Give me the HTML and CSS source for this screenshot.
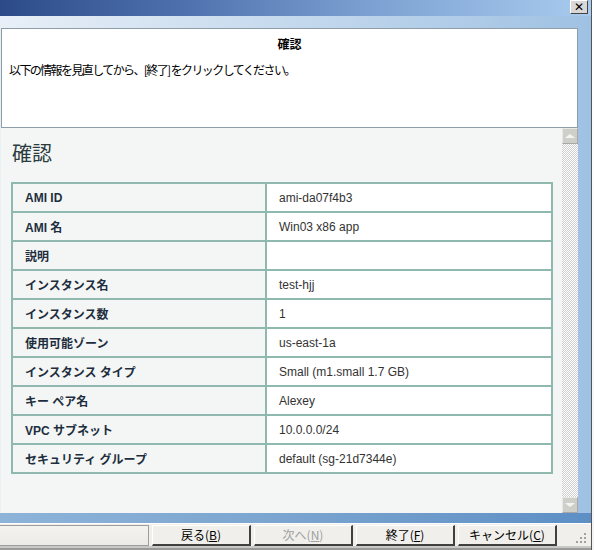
FILE: index.html
```html
<!DOCTYPE html>
<html lang="ja">
<head>
<meta charset="utf-8">
<link rel="stylesheet" href="styles.css">
</head>
<body>
<div class="screen">
  <div class="window">
    <div class="titlebar">
      <div class="close">✕</div>
    </div>
    <div class="frame">
      <div class="header">
        <div class="header-title">確認</div>
        <div class="header-text">以下の情報を見直してから、[終了] をクリックしてください。</div>
      </div>
      <div class="content">
        <div class="scroll-area">
          <h1 class="heading">確認</h1>
          <table class="info">
            <tr><th>AMI ID</th><td>ami-da07f4b3</td></tr>
            <tr><th>AMI 名</th><td>Win03 x86 app</td></tr>
            <tr><th>説明</th><td></td></tr>
            <tr><th>インスタンス名</th><td>test-hjj</td></tr>
            <tr><th>インスタンス数</th><td>1</td></tr>
            <tr><th>使用可能ゾーン</th><td>us-east-1a</td></tr>
            <tr><th>インスタンス タイプ</th><td>Small (m1.small 1.7 GB)</td></tr>
            <tr><th>キー ペア名</th><td>Alexey</td></tr>
            <tr><th>VPC サブネット</th><td>10.0.0.0/24</td></tr>
            <tr><th>セキュリティ グループ</th><td>default (sg-21d7344e)</td></tr>
          </table>
        </div>
        <div class="scrollbar">
          <div class="sb-btn up"><span class="tri-up"></span></div>
          <div class="sb-track"></div>
          <div class="sb-btn down"><span class="tri-down"></span></div>
        </div>
      </div>
      <div class="blue-strip"></div>
    </div>
    <div class="buttonbar">
      <div class="field"></div>
      <div class="btn">戻る(<u>B</u>)</div>
      <div class="btn disabled">次へ(<u>N</u>)</div>
      <div class="btn">終了(<u>F</u>)</div>
      <div class="btn">キャンセル(<u>C</u>)</div>
      <div class="grip">
        <svg width="12" height="12" viewBox="0 0 12 12">
          <rect x="9" y="1" width="2" height="2" fill="#a0a0a0"/>
          <rect x="5" y="5" width="2" height="2" fill="#a0a0a0"/>
          <rect x="9" y="5" width="2" height="2" fill="#a0a0a0"/>
          <rect x="1" y="9" width="2" height="2" fill="#a0a0a0"/>
          <rect x="5" y="9" width="2" height="2" fill="#a0a0a0"/>
          <rect x="9" y="9" width="2" height="2" fill="#a0a0a0"/>
        </svg>
      </div>
    </div>
    <div class="bottom-edge"></div>
  </div>
  <div class="behind"></div>
</div>
</body>
</html>
```
FILE: styles.css
```css
* { box-sizing: border-box; }
html, body { margin: 0; padding: 0; }
body {
  width: 594px;
  height: 550px;
  overflow: hidden;
  font-family: "Noto Sans CJK JP", "Liberation Sans", sans-serif;
  background: #6e8fb8;
}
.screen {
  display: flex;
  width: 594px;
  height: 550px;
}
.window {
  width: 591px;
  height: 550px;
  display: flex;
  flex-direction: column;
}
.behind {
  width: 3px;
  background: linear-gradient(to bottom, #ffffff 0, #f4f4f4 100%);
  border-left: 1px solid #555;
}
.titlebar {
  height: 16px;
  background: linear-gradient(to right, #2c4a88 0%, #4d70ad 30%, #7fa4d4 65%, #a9cbef 100%);
  display: flex;
  justify-content: flex-end;
  padding-right: 3px;
}
.close {
  width: 18px;
  height: 14px;
  background: #d8d8d8;
  border: 1px solid #444;
  border-top-color: #fff;
  border-left-color: #fff;
  font-size: 12px;
  line-height: 12px;
  text-align: center;
  color: #000;
  font-weight: bold;
  font-family: "DejaVu Sans", sans-serif;
}
.frame {
  flex: 1;
  display: flex;
  flex-direction: column;
  padding: 12px 13px 0 1px;
  background: linear-gradient(to right, #e8eff7 0%, #c8dbee 45%, #9fc1e3 100%);
}
.header {
  height: 99px;
  background: #fff;
  border: 1px solid #8e9ea8;
  border-bottom: none;
  padding: 6px 7px 0 7px;
}
.header-title {
  text-align: center;
  font-size: 12px;
  font-weight: bold;
  line-height: 18px;
  color: #000;
}
.header-text {
  margin-top: 8px;
  font-size: 12px;
  line-height: 18px;
  color: #000;
  letter-spacing: -1.6px;
}
.content {
  height: 386px;
  display: flex;
  border-top: 1px solid #8e9ea8;
}
.scroll-area {
  flex: 1;
  background: #f3f6f5;
  padding: 12px 9px 0 10px;
  overflow: hidden;
}
.heading {
  margin: 0;
  font-size: 20px;
  font-weight: normal;
  line-height: 26px;
  color: #2b3b3d;
  padding-left: 1px;
}
.info {
  margin-top: 16px;
  width: 542px;
  border-collapse: collapse;
  border: 2px solid #8fb9ae;
  font-size: 12px;
}
.info th, .info td {
  height: 29px;
  border: 2px solid #8fb9ae;
  padding: 0 12px;
  text-align: left;
  vertical-align: middle;
}
.info th {
  width: 254px;
  background: #f3f6f5;
  font-weight: bold;
  color: #1e2e3e;
  font-family: "Liberation Sans", "Noto Sans CJK JP", sans-serif;
}
.info td {
  background: #fff;
  color: #333;
  font-family: "Liberation Sans", "Noto Sans CJK JP", sans-serif;
}
.scrollbar {
  width: 16px;
  display: flex;
  flex-direction: column;
}
.sb-track {
  flex: 1;
  background: repeating-conic-gradient(#cfcfcf 0 25%, #ffffff 0 50%) 0 0 / 2px 2px;
}
.sb-btn {
  height: 16px;
  background: #cfcfca;
  border: 1px solid #e8e8e4;
  border-right-color: #a8a8a4;
  border-bottom-color: #a8a8a4;
  display: flex;
  align-items: center;
  justify-content: center;
}
.tri-up {
  width: 0; height: 0;
  border-left: 5px solid transparent;
  border-right: 5px solid transparent;
  border-bottom: 4px solid #f4f4f4;
}
.tri-down {
  width: 0; height: 0;
  border-left: 5px solid transparent;
  border-right: 5px solid transparent;
  border-top: 4px solid #f4f4f4;
}
.blue-strip {
  height: 10px;
  margin-left: -1px;
  margin-right: -13px;
  background: linear-gradient(to right, #8db3d9 0%, #7aa4cf 50%, #5d8fc5 100%);
}
.buttonbar {
  height: 23px;
  display: flex;
  align-items: stretch;
  background: #f0efeb;
  border-top: 1px solid #fff;
  padding-top: 1px;
  gap: 3px;
}
.field {
  width: 149px;
  border: 1px solid #9c9c9c;
  border-left: none;
  background: linear-gradient(to bottom, #f4f3f0, #ebeae6);
}
.btn {
  width: 99px;
  border: 1px solid #fff;
  border-right: 2px solid #404040;
  border-bottom: 2px solid #404040;
  background: #f0efeb;
  font-size: 12px;
  text-align: center;
  line-height: 18px;
  color: #000;
}
.btn u { color: #000; }
.btn.disabled { color: #a0a0a0; }
.btn.disabled u { color: #a0a0a0; }
.grip {
  flex: 1;
  display: flex;
  align-items: flex-end;
  justify-content: flex-end;
  padding: 0 4px 2px 0;
}
.bottom-edge {
  flex: 1;
  background: #9a9a98;
  border-top: 2px solid #c8c8c4;
}
```
